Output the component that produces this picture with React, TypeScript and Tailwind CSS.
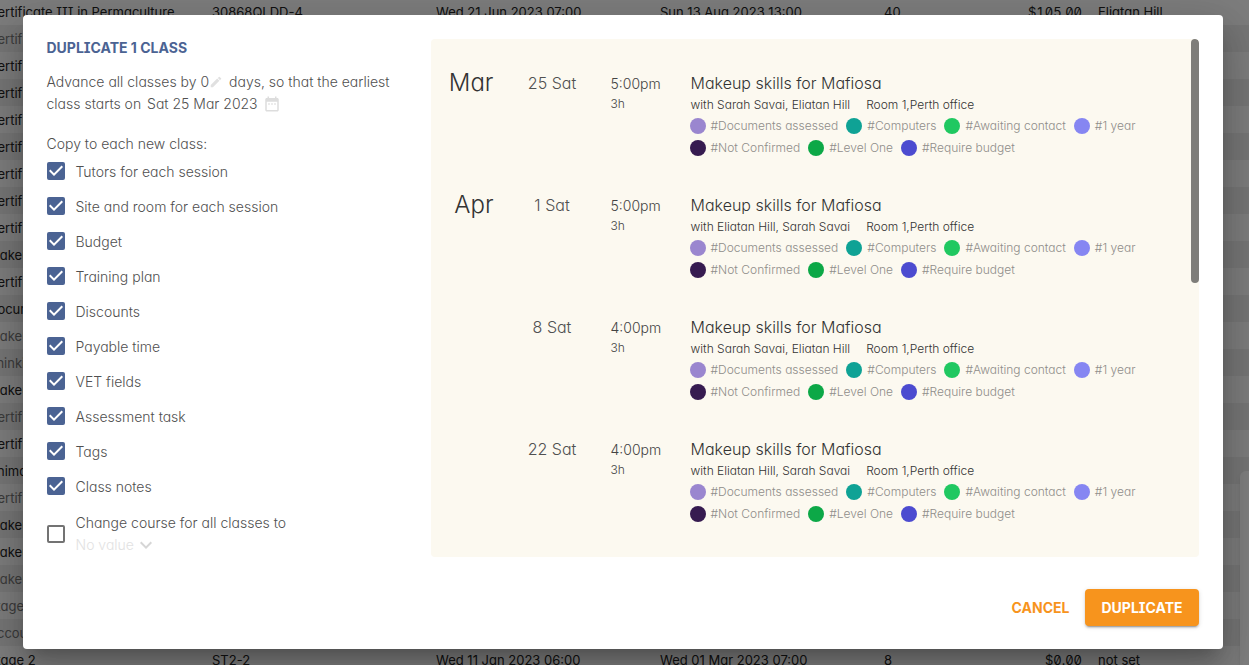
import React from "react";

type Row = { name: string; code?: string; start?: string; end?: string; places?: string; fee?: string; tutor?: string; muted?: boolean };

const classRows: Row[] = [
  { name: "Certificate III in Permaculture", code: "30868QLDD-4", start: "Wed 21 Jun 2023 07:00", end: "Sun 13 Aug 2023 13:00", places: "40", fee: "$105.00", tutor: "Eliatan Hill" },
  { name: "Certificate", muted: true },
  { name: "Certificate" },
  { name: "Certificate" },
  { name: "Certificate" },
  { name: "Certificate" },
  { name: "Certificate" },
  { name: "Certificate" },
  { name: "Certificate" },
  { name: "Makeup" },
  { name: "Certificate" },
  { name: "Document" },
  { name: "Makeup", muted: true },
  { name: "Thinking", muted: true },
  { name: "Makeup" },
  { name: "Certificate", muted: true },
  { name: "Certificate" },
  { name: "Animal" },
  { name: "Certificate", muted: true },
  { name: "Makeup" },
  { name: "Makeup" },
  { name: "Makeup", muted: true },
  { name: "Stage", muted: true },
  { name: "Accounting", muted: true },
  { name: "Stage 2", code: "ST2-2", start: "Wed 11 Jan 2023 06:00", end: "Wed 01 Mar 2023 07:00", places: "8", fee: "$0.00", tutor: "not set" },
];

const copyOptions = [
  "Tutors for each session",
  "Site and room for each session",
  "Budget",
  "Training plan",
  "Discounts",
  "Payable time",
  "VET fields",
  "Assessment task",
  "Tags",
  "Class notes",
];

const sessions = [
  { month: "Mar", day: "25 Sat", time: "5:00pm", tutors: "Sarah Savai, Eliatan Hill" },
  { month: "Apr", day: "1 Sat", time: "5:00pm", tutors: "Eliatan Hill, Sarah Savai" },
  { month: "", day: "8 Sat", time: "4:00pm", tutors: "Sarah Savai, Eliatan Hill" },
  { month: "", day: "22 Sat", time: "4:00pm", tutors: "Eliatan Hill, Sarah Savai" },
];

const tags = [
  { label: "#Documents assessed", dot: "bg-[#9a86cf]" },
  { label: "#Computers", dot: "bg-[#0fa295]" },
  { label: "#Awaiting contact", dot: "bg-[#20c861]" },
  { label: "#1 year", dot: "bg-[#8686f2]" },
  { label: "#Not Confirmed", dot: "bg-[#361b50]" },
  { label: "#Level One", dot: "bg-[#0ca847]" },
  { label: "#Require budget", dot: "bg-[#4c4bd0]" },
];

function ClassTable() {
  return (
    <div className="absolute inset-0 overflow-hidden bg-white">
      <table className="-mt-[2px] -ml-3 w-[calc(100%+12px)] table-fixed border-collapse text-[13px] leading-[26px] font-normal">
        <colgroup>
          <col className="w-56" />
          <col className="w-56" />
          <col className="w-56" />
          <col className="w-56" />
          <col className="w-[100px]" />
          <col className="w-[98px]" />
          <col />
        </colgroup>
        <tbody>
          {classRows.map((r, i) => (
            <tr key={i} className={`h-[27px] whitespace-nowrap odd:bg-[#fafafa] even:bg-[#ececec] ${r.muted ? "text-[#777777]" : "text-[#222222]"}`}>
              <td className="p-0">{r.name}</td>
              <td className="p-0">{r.code}</td>
              <td className="p-0">{r.start}</td>
              <td className="p-0">{r.end}</td>
              <td className="p-0">{r.places}</td>
              <td className="p-0 text-right tabular-nums slashed-zero">{r.fee}</td>
              <td className="py-0 pr-0 pl-4">{r.tutor}</td>
            </tr>
          ))}
        </tbody>
      </table>
      <div className="absolute -right-2 -bottom-2 h-[202px] w-[17px] rounded-md bg-white shadow-md" />
    </div>
  );
}

function Checkbox({ id, checked }: { id: string; checked?: boolean }) {
  return (
    <span className="grid size-[18px] shrink-0">
      <input
        id={id}
        type="checkbox"
        defaultChecked={checked}
        className="peer col-start-1 row-start-1 size-[18px] appearance-none rounded-xs border-2 border-[#737373] checked:border-[#4b6393] checked:bg-[#4b6393]"
      />
      <svg viewBox="3 3 18 18" className="pointer-events-none invisible col-start-1 row-start-1 size-[18px] fill-white peer-checked:visible" aria-hidden="true">
        <path d="M10 17l-5-5 1.41-1.41L10 14.17l7.59-7.59L19 8l-9 9z" />
      </svg>
    </span>
  );
}

function Tag({ label, dot }: { label: string; dot: string }) {
  return (
    <span className="flex h-[22px] items-center gap-[5px] text-xs font-light text-[#8f8d8a]">
      <span className={`size-4 rounded-full ${dot}`} />
      {label}
    </span>
  );
}

export default function App() {
  return (
    <div className="relative h-screen overflow-hidden font-['Inter',sans-serif] [font-feature-settings:'cv11','cv08']">
      <ClassTable />
      <div className="absolute inset-0 flex justify-center bg-black/50 pt-[15px] pr-5 pb-4 pl-4">
        <div
          role="dialog"
          aria-labelledby="dialog-title"
          className="flex w-full max-w-[1200px] flex-col rounded bg-white px-6 pt-6 pb-[23px] shadow-[0_11px_15px_-7px_rgba(0,0,0,0.2),0_24px_38px_3px_rgba(0,0,0,0.14),0_9px_46px_8px_rgba(0,0,0,0.12)]"
        >
          <div className="flex min-h-0 flex-1">
            <div className="w-96 shrink-0 text-sm leading-[22px] font-light text-[#505050]">
              <h2 id="dialog-title" className="text-sm leading-[18px] font-bold text-[#4b6393]">
                DUPLICATE 1 CLASS
              </h2>
              <div className="pt-[14px]">
                <p className="flex items-center whitespace-pre">
                  Advance all classes by{" "}
                  <button type="button" aria-label="Edit days" className="mr-1.5 flex items-center">
                    0
                    <svg viewBox="0 0 24 24" className="size-[14px] fill-[#e0e0e0]" aria-hidden="true">
                      <path d="M3 17.25V21h3.75L17.81 9.94l-3.75-3.75L3 17.25zM20.71 7.04a.996.996 0 000-1.41l-2.34-2.34a.996.996 0 00-1.41 0l-1.83 1.83 3.75 3.75 1.83-1.83z" />
                    </svg>
                  </button>
                  {" "}days, so that the earliest
                </p>
                <p className="flex items-center whitespace-pre">
                  class starts on{" "}
                  <button type="button" aria-label="Choose date" className="ml-0.5 flex items-center gap-[5px]">
                    Sat 25 Mar 2023
                    <svg viewBox="0 0 24 24" className="size-[18px] fill-[#dddddd]" aria-hidden="true">
                      <path d="M9 11H7v2h2v-2zm4 0h-2v2h2v-2zm4 0h-2v2h2v-2zm2-7h-1V2h-2v2H8V2H6v2H5c-1.110 0-1.990.9-1.990 2L3 20c0 1.100.89 2 2 2h14c1.100 0 2-.9 2-2V6c0-1.100-.9-2-2-2zm0 16H5V9h14v11z" />
                    </svg>
                  </button>
                </p>
              </div>
              <p className="pt-[18px] pb-px">Copy to each new class:</p>
              <ul>
                {copyOptions.map((o, i) => (
                  <li key={o} className="flex h-[35px] items-start gap-[11px] pt-[6px]">
                    <Checkbox id={`copy-${i}`} checked />
                    <label htmlFor={`copy-${i}`} className="leading-5">
                      {o}
                    </label>
                  </li>
                ))}
              </ul>
              <div className="flex items-center gap-[11px] pt-[6px]">
                <Checkbox id="change-course" />
                <div className="flex flex-col items-start">
                  <label htmlFor="change-course">Change course for all classes to</label>
                  <button type="button" disabled className="flex h-[22px] items-center text-[#e2e2e2]">
                    No value
                    <svg viewBox="0 0 24 24" className="size-6 fill-[#d6d6d6]" aria-hidden="true">
                      <path d="M7.41 8.59L12 13.17l4.59-4.58L18 10l-6 6-6-6 1.410-1.410z" />
                    </svg>
                  </button>
                </div>
              </div>
            </div>

            <div className="relative min-w-0 flex-1 overflow-hidden rounded bg-[#fcf9f0] pt-8">
              {sessions.map((s) => (
                <div key={s.day} className="flex h-[122px] font-light text-[#333333]">
                  <div className="w-[63px] text-right text-2xl leading-6">{s.month}</div>
                  <div className="w-[117px] text-center text-base leading-6 text-[#505050]">{s.day}</div>
                  <div className="w-20 text-[#444444]">
                    <div className="text-sm leading-[26px]">{s.time}</div>
                    <div className="text-xs leading-[14px]">3h</div>
                  </div>
                  <div className="max-w-[460px] flex-1">
                    <h3 className="text-base leading-6 font-light">Makeup skills for Mafiosa</h3>
                    <p className="flex gap-4 text-xs leading-5">
                      <span>with {s.tutors}</span>
                      <span>Room 1,Perth office</span>
                    </p>
                    <div className="-ml-px flex flex-wrap gap-x-2">
                      {tags.map((t) => (
                        <Tag key={t.label} {...t} />
                      ))}
                    </div>
                  </div>
                </div>
              ))}
              <div className="absolute top-0 right-0 h-[244px] w-2 rounded-full bg-[#7e7d79]" />
            </div>
          </div>

          <div className="flex justify-end gap-2 pt-8 text-sm leading-[18px] font-bold">
            <button type="button" className="h-[37px] rounded px-2 text-[#f7941d]">
              CANCEL
            </button>
            <button type="button" className="h-[37px] rounded bg-[#f7941d] px-4 text-white shadow-[0_3px_1px_-2px_rgba(0,0,0,0.2),0_2px_2px_0_rgba(0,0,0,0.14),0_1px_5px_0_rgba(0,0,0,0.12)]">
              DUPLICATE
            </button>
          </div>
        </div>
      </div>
    </div>
  );
}
